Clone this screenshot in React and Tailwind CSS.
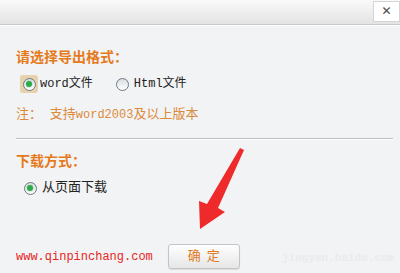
import React from "react";

const Radio = ({ checked, focused }) => (
  <span
    className={`flex h-[18px] w-[18px] items-center justify-center ${
      focused ? "rounded-[3px] bg-[#e6d2ac]" : ""
    }`}
  >
    <span className="flex h-[13px] w-[13px] items-center justify-center rounded-full border border-[#6f7a86] bg-gradient-to-b from-[#d8dde3] to-[#ffffff]">
      {checked && <span className="h-[6px] w-[6px] rounded-full bg-[#2fa84a] shadow-[0_0_2px_#7fd98f]" />}
    </span>
  </span>
);

const Arrow = () => (
  <svg className="absolute left-[190px] top-[146px]" width="60" height="90" viewBox="0 0 60 90">
    <path
      d="M54 4 L28 62 L35 66 L10 83 L9 55 L17 58 L50 2 Z"
      fill="#ee2a2a"
    />
  </svg>
);

export default function App() {
  const cjk = { fontFamily: '"Liberation Mono", "Noto Sans CJK SC", monospace' };
  return (
    <div className="relative h-[273px] w-[400px] overflow-hidden bg-[#f2f3f4]" style={cjk}>
      {/* header */}
      <div className="flex h-[25px] justify-end border-b border-[#c9c9c9] bg-gradient-to-b from-[#fafafa] to-[#e3e3e3] shadow-[0_1px_0_#ffffff]">
        <div className="mt-[1px] flex h-[21px] w-[27px] items-center justify-center border border-[#d4d4d4] bg-white text-[15px] font-bold leading-none text-[#555]">
          ✕
        </div>
      </div>

      <div className="px-4 pt-[25px]">
        <div className="text-[14px] font-bold leading-[16px] text-[#e57a1c]">请选择导出格式：</div>

        <div className="mt-[9px] flex items-center text-[12px] leading-[18px] text-[#222]">
          <div className="ml-[4px] flex items-center gap-[2px]">
            <Radio checked focused />
            <span>word文件</span>
          </div>
          <div className="ml-[21px] flex items-center gap-[2px]">
            <Radio />
            <span>Html文件</span>
          </div>
        </div>

        <div className="mt-[14px] text-[13px] leading-[16px] text-[#dc8a3c]">
          注：&nbsp;支持<span className="text-[12px]">word2003</span>及以上版本
        </div>

        <div className="mr-[-9px] mt-[15px] h-px bg-[#bdbdbd] shadow-[0_1px_0_#ffffff]" />

        <div className="mt-[15px] text-[14px] font-bold leading-[16px] text-[#e57a1c]">下载方式：</div>

        <div className="ml-[5px] mt-[9px] flex items-center gap-[3px] text-[13px] leading-[18px] text-[#222]">
          <Radio checked />
          <span>从页面下载</span>
        </div>

        <div className="mt-[47px] flex items-center">
          <span className="text-[12px] leading-[16px] text-[#e8241f]">www.qinpinchang.com</span>
          <button className="ml-[15px] flex h-[25px] w-[72px] items-center justify-center rounded-[3px] border border-[#c4c4c4] bg-gradient-to-b from-[#ffffff] to-[#e6e6e6] text-[13px] tracking-[6px] text-[#e07a22] shadow-[0_1px_1px_rgba(0,0,0,0.1)]">
            <span className="ml-[6px]">确定</span>
          </button>
        </div>
      </div>

      <Arrow />

      <div className="absolute left-[282px] top-[250px] text-[11px] font-bold text-[#e9ebec]">jingyan.baidu.com</div>
    </div>
  );
}
